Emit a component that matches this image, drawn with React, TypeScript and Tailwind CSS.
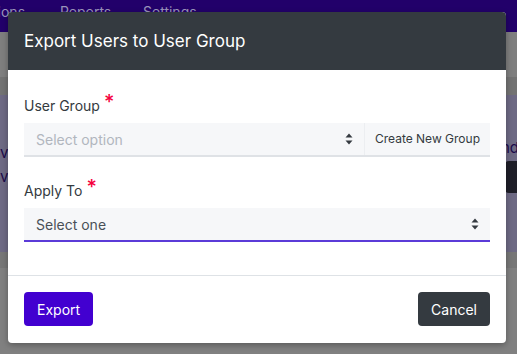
export default function App() {
  return (
    <div className="relative h-[354px] w-[517px] overflow-hidden bg-[#808080] font-['Inter',sans-serif]">
      {/* dimmed page behind the modal */}
      <div className="flex h-[32px] items-start bg-[#22006a] pt-[2px] text-[14px] leading-[20px] text-[#9a93bb]">
        <span className="-ml-[7px] w-[67px]">tions</span>
        <span className="w-[83px]">Reports</span>
        <span>Settings</span>
      </div>
      <div className="h-[45px] bg-[#7f7f7f]" />
      <div className="h-[18px] bg-[#737373]" />
      <div className="flex h-[157px] justify-between bg-[#6e6a84]">
        <div className="flex flex-col pt-[46px] text-[15px] leading-[24px] text-[#1c0a4a]">
          <span>v</span>
          <span>vi</span>
        </div>
        <div className="flex flex-col items-end pt-[42px] text-[15px] leading-[22px] text-[#1c0a4a]">
          <span className="-mr-[2px]">nd</span>
          <div className="mt-[2px] h-[32px] w-[12px] rounded-l-[4px] bg-[#1e1e28]" />
        </div>
      </div>
      <div className="h-[16px] bg-[#777777]" />

      {/* modal */}
      <div className="absolute left-[8px] top-[12px] w-[498px] overflow-hidden rounded-[4px] bg-white shadow-[0_2px_6px_rgba(0,0,0,0.3)]">
        <div className="flex h-[58px] items-center bg-[#343a40] px-[16px] pt-[1px] text-[17px] text-white">
          Export Users to User Group
        </div>
        <div className="px-[16px] pb-[33px] pt-[25px]">
          <label className="flex items-start text-[14px] leading-[22px] text-[#343a40]">
            User Group
            <span className="ml-[4px] -mt-[3px] text-[20px] font-medium leading-[20px] text-[#f5003d]">*</span>
          </label>
          <div className="mt-[6px] flex h-[34px] items-stretch border-b-2 border-[#dfe2e6] bg-[#f6f7f9]">
            <div className="flex flex-1 items-center justify-between pl-[12px] pr-[11px] text-[14px] text-[#b1b6be]">
              <span>Select option</span>
              <Arrows />
            </div>
            <div className="flex items-center border-l border-[#eceef1] px-[10px] text-[12px] text-[#343a40]">
              Create New Group
            </div>
          </div>

          <label className="mt-[23px] flex items-start text-[14px] leading-[22px] text-[#343a40]">
            Apply To
            <span className="ml-[4px] -mt-[3px] text-[20px] font-medium leading-[20px] text-[#f5003d]">*</span>
          </label>
          <div className="mt-[6px] flex h-[34px] items-center justify-between border-b-2 border-[#5b3bd8] bg-[#f6f7f9] pl-[12px] pr-[11px] text-[14px] text-[#495057]">
            <span>Select one</span>
            <Arrows />
          </div>
        </div>
        <div className="flex items-center justify-between border-t border-[#dee2e6] px-[16px] pb-[17px] pt-[16px]">
          <button className="h-[34px] rounded-[4px] bg-[#4200d0] px-[13px] text-[14px] text-white">
            Export
          </button>
          <button className="h-[34px] rounded-[4px] bg-[#343a40] px-[13px] text-[14px] text-white">
            Cancel
          </button>
        </div>
      </div>
    </div>
  );
}

function Arrows() {
  return (
    <svg width="8" height="12" viewBox="0 0 8 12" className="shrink-0">
      <path d="M4 0.5 L7.5 4.5 H0.5 Z" fill="#343a40" />
      <path d="M4 11.5 L7.5 7.5 H0.5 Z" fill="#343a40" />
    </svg>
  );
}
